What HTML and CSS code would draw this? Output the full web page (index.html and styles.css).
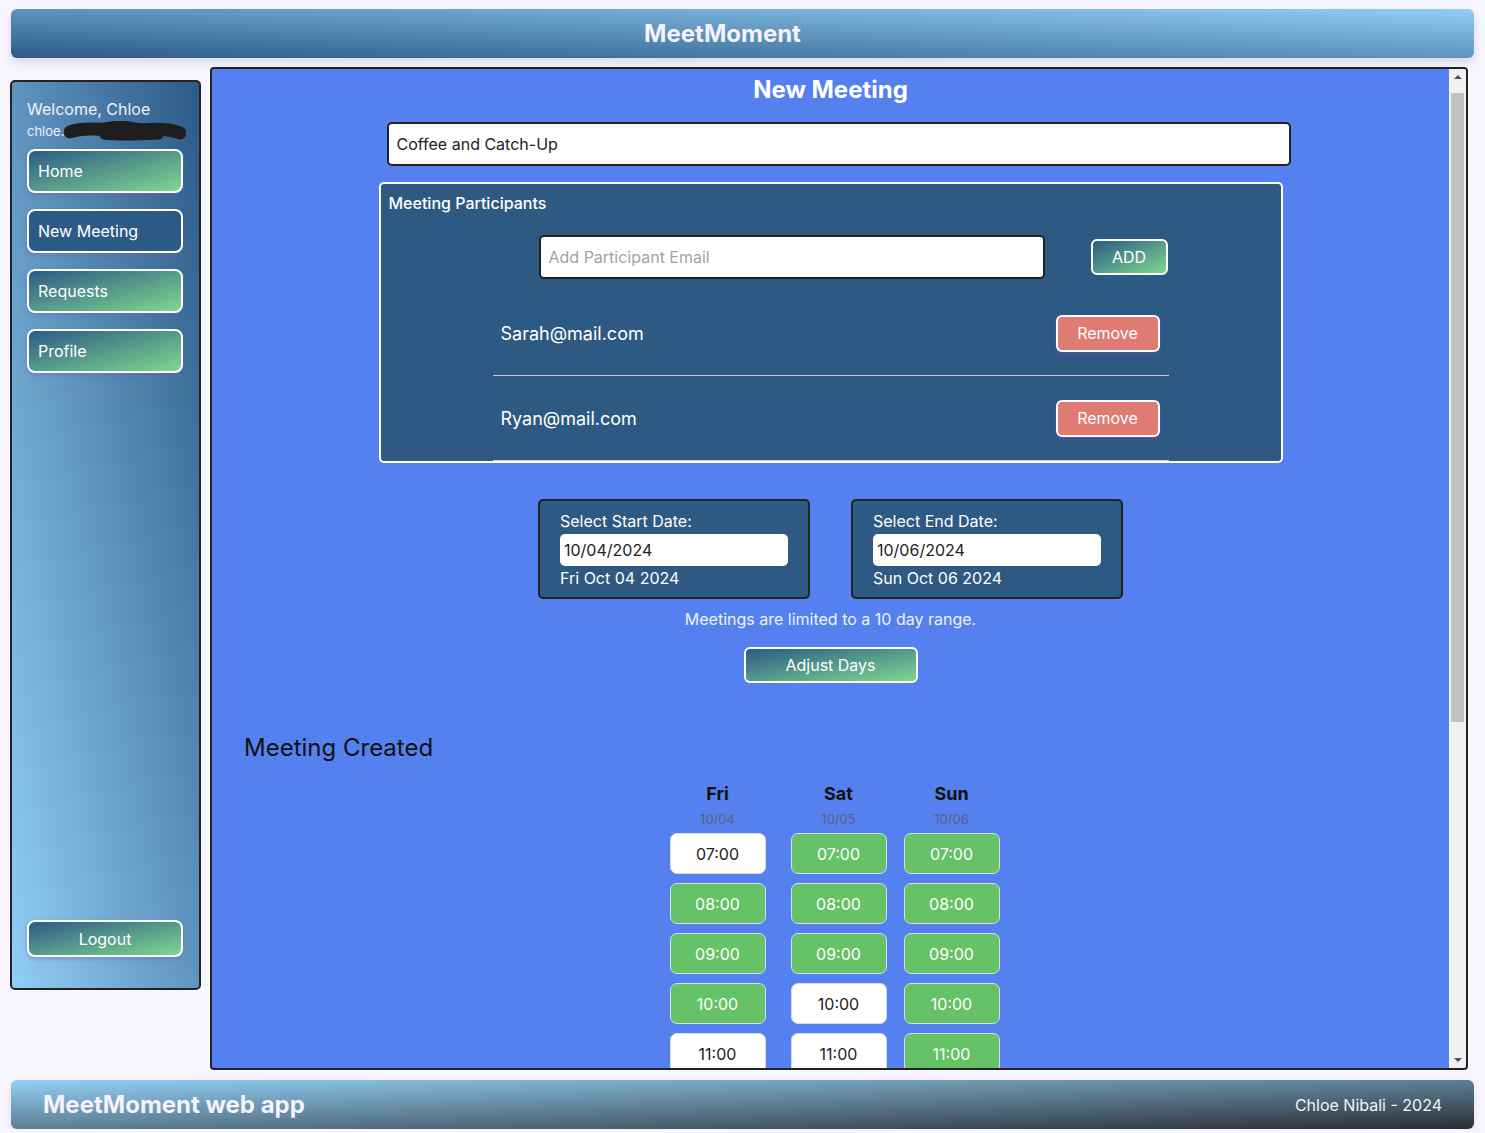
FILE: index.html
```html
<!DOCTYPE html>
<html lang="en">
<head>
<meta charset="utf-8">
<title>MeetMoment</title>
<link rel="stylesheet" href="styles.css">
</head>
<body>
<div class="app">
  <header class="topbar"><h1 class="brand">MeetMoment</h1></header>
  <div class="layout">
    <aside class="sidebar">
      <div class="welcome">Welcome, Chloe</div>
      <div class="email-line">chloe.<svg class="redact" width="122" height="22" viewBox="0 0 122 22"><path d="M6 11 C20 6 30 9 40 8 C52 6 60 5 70 8 C82 10 92 7 104 9 C110 10 114 11 116 12" stroke="#1e1e1e" stroke-width="13" stroke-linecap="round" fill="none"/><path d="M40 14 C55 16 75 15 95 14" stroke="#1e1e1e" stroke-width="9" stroke-linecap="round" fill="none"/></svg></div>
      <nav class="nav">
        <a class="nav-btn">Home</a>
        <a class="nav-btn active">New Meeting</a>
        <a class="nav-btn">Requests</a>
        <a class="nav-btn">Profile</a>
      </nav>
      <a class="logout">Logout</a>
    </aside>
    <main class="panel">
      <div class="panel-content">
        <h2 class="page-title">New Meeting</h2>
        <div class="title-wrap"><input class="title-input" type="text" value="Coffee and Catch-Up"></div>
        <section class="participants">
          <div class="participants-label">Meeting Participants</div>
          <div class="participants-inner">
            <div class="add-row">
              <input class="email-input" type="text" placeholder="Add Participant Email">
              <button class="btn-grad add-btn">ADD</button>
            </div>
            <div class="p-row"><span class="p-email">Sarah@mail.com</span><button class="remove-btn">Remove</button></div>
            <div class="p-row"><span class="p-email">Ryan@mail.com</span><button class="remove-btn">Remove</button></div>
          </div>
        </section>
        <div class="dates">
          <div class="date-box">
            <div class="date-label">Select Start Date:</div>
            <input class="date-input" type="text" value="10/04/2024">
            <div class="date-text">Fri Oct 04 2024</div>
          </div>
          <div class="date-box">
            <div class="date-label">Select End Date:</div>
            <input class="date-input" type="text" value="10/06/2024">
            <div class="date-text">Sun Oct 06 2024</div>
          </div>
        </div>
        <p class="limit">Meetings are limited to a 10 day range.</p>
        <div class="center"><button class="btn-grad adjust-btn">Adjust Days</button></div>
        <h3 class="created">Meeting Created</h3>
        <div class="schedule">
          <div class="day day-fri">
            <div class="day-name">Fri</div>
            <div class="day-date">10/04</div>
            <div class="slot">07:00</div>
            <div class="slot on">08:00</div>
            <div class="slot on">09:00</div>
            <div class="slot on">10:00</div>
            <div class="slot">11:00</div>
          </div>
          <div class="day">
            <div class="day-name">Sat</div>
            <div class="day-date">10/05</div>
            <div class="slot on">07:00</div>
            <div class="slot on">08:00</div>
            <div class="slot on">09:00</div>
            <div class="slot">10:00</div>
            <div class="slot">11:00</div>
          </div>
          <div class="day">
            <div class="day-name">Sun</div>
            <div class="day-date">10/06</div>
            <div class="slot on">07:00</div>
            <div class="slot on">08:00</div>
            <div class="slot on">09:00</div>
            <div class="slot on">10:00</div>
            <div class="slot on">11:00</div>
          </div>
        </div>
      </div>
      <div class="scrollbar">
        <div class="sb-btn"><span class="arrow-up"></span></div>
        <div class="sb-track"><div class="sb-thumb"></div></div>
        <div class="sb-btn"><span class="arrow-down"></span></div>
      </div>
    </main>
  </div>
  <footer class="footer">
    <span class="footer-brand">MeetMoment web app</span>
    <span class="footer-credit">Chloe Nibali - 2024</span>
  </footer>
</div>
</body>
</html>
```

FILE: styles.css
```css
* { box-sizing: border-box; }
html, body { margin: 0; padding: 0; }
body {
  background: #f7f5fd;
  font-family: Inter, "Noto Sans", "Liberation Sans", sans-serif;
  color: #fff;
  overflow: hidden;
}
.app { padding: 9px 11px 0 11px; }

.topbar {
  height: 49px;
  border-radius: 6px;
  background: linear-gradient(to top right, #2c5a87, #91cef4);
  box-shadow: 0 4px 8px rgba(60, 50, 110, 0.15);
  display: flex;
  align-items: center;
  justify-content: center;
  padding-right: 40px;
}
.brand {
  margin: 0;
  font-size: 24px;
  font-weight: 700;
  color: #f4f2fc;
  line-height: 29px;
}

.layout {
  display: flex;
  align-items: flex-start;
  margin-top: 9px;
  margin-left: -1px;
}

.sidebar {
  width: 191px;
  height: 910px;
  margin-top: 13px;
  border: 2px solid #222;
  border-radius: 5px;
  background: linear-gradient(to bottom left, #2c5a87, #91cef4);
  padding: 18px 16px 31px 15px;
  display: flex;
  flex-direction: column;
}
.welcome { font-size: 16px; line-height: 19px; color: #eef0fb; }
.email-line {
  font-size: 13px;
  line-height: 18px;
  margin-top: 3px;
  color: #eef0fb;
  display: flex;
  align-items: center;
  height: 18px;
}
.redact { margin-left: 0; margin-top: 2px; flex: none; }
.nav { display: flex; flex-direction: column; gap: 16px; margin-top: 9px; }
.nav-btn, .logout {
  display: flex;
  align-items: center;
  height: 44px;
  padding-left: 9px;
  border: 2px solid #fff;
  border-radius: 8px;
  background: linear-gradient(to bottom right, #2c5a87, #7fd88e);
  color: #fff;
  font-size: 16px;
  box-shadow: 0 2px 4px rgba(110, 90, 200, 0.45);
}
.nav-btn.active { background: #2c5a87; }
.logout {
  margin-top: auto;
  height: 37px;
  justify-content: center;
  padding-left: 0;
}

.panel {
  width: 1258px;
  height: 1003px;
  margin-left: 9px;
  border: 2px solid #222;
  border-radius: 4px;
  background: #5481ef;
  display: flex;
  overflow: hidden;
}
.panel-content {
  flex: 1;
  min-width: 0;
  overflow: hidden;
}
.scrollbar {
  width: 17px;
  flex: none;
  background: #f1f1f1;
  display: flex;
  flex-direction: column;
}
.sb-btn {
  height: 16px;
  display: flex;
  align-items: center;
  justify-content: center;
}
.arrow-up, .arrow-down {
  width: 0;
  height: 0;
  border-left: 4px solid transparent;
  border-right: 4px solid transparent;
}
.arrow-up { border-bottom: 4px solid #505050; }
.arrow-down { border-top: 4px solid #505050; }
.sb-track { flex: 1; padding: 8px 2px 0; }
.sb-thumb { height: 629px; background: #c1c1c1; }

.page-title {
  margin: 6px 0 0;
  font-size: 24px;
  line-height: 29px;
  font-weight: 700;
  text-align: center;
  color: #fff;
}
.title-wrap { width: 920px; margin: 18px auto 0; padding-left: 16px; }
.title-input {
  display: block;
  width: 100%;
  height: 44px;
  border: 2px solid #222;
  border-radius: 5px;
  padding: 0 8px;
  font-family: inherit;
  font-size: 16px;
  color: #222;
  background: #fff;
  outline: none;
}

.participants {
  width: 904px;
  margin: 16px auto 0;
  border: 2px solid #fff;
  border-radius: 5px;
  background: #2d5983;
  padding: 10px 0 0;
}
.participants-label {
  padding-left: 8px;
  font-size: 16px;
  line-height: 19px;
  font-weight: 500;
  color: #fff;
}
.participants-inner { width: 676px; margin: 0 auto; }
.add-row {
  display: flex;
  align-items: center;
  gap: 46px;
  margin-top: 22px;
  padding-left: 46px;
}
.email-input {
  width: 506px;
  height: 44px;
  border: 2px solid #222;
  border-radius: 5px;
  padding: 0 8px;
  font-family: inherit;
  font-size: 16px;
  color: #222;
  background: #fff;
  outline: none;
}
.email-input::placeholder { color: #9ca3af; }
.btn-grad {
  border: 2px solid #fff;
  border-radius: 6px;
  background: linear-gradient(to bottom right, #2c5a87, #7fd88e);
  color: #fff;
  font-family: inherit;
  font-size: 16px;
  padding: 0;
}
.add-btn { width: 77px; height: 36px; }
.p-row {
  display: flex;
  align-items: center;
  justify-content: space-between;
  height: 85px;
  padding: 0 9px 0 8px;
  border-bottom: 1px solid #c9ccd6;
}
.add-row + .p-row { margin-top: 12px; }
.p-email { font-size: 18px; color: #fff; }
.remove-btn {
  width: 104px;
  height: 37px;
  border: 2px solid #fff;
  border-radius: 6px;
  background: #e07b74;
  color: #fff;
  font-family: inherit;
  font-size: 16px;
  box-shadow: 0 2px 4px rgba(110, 90, 200, 0.45);
}

.dates {
  display: flex;
  justify-content: center;
  gap: 41px;
  margin-top: 36px;
}
.date-box {
  width: 272px;
  height: 100px;
  border: 2px solid #222;
  border-radius: 5px;
  background: #2d5983;
  padding: 11px 20px 10px;
}
.date-label, .date-text { font-size: 16px; line-height: 19px; color: #fff; }
.date-input {
  display: block;
  width: 100%;
  height: 32px;
  margin: 3px 0 3px;
  border: none;
  border-radius: 5px;
  padding: 0 4px;
  font-family: inherit;
  font-size: 16px;
  color: #222;
  background: #fff;
  outline: none;
}
.limit {
  margin: 11px 0 0;
  text-align: center;
  font-size: 16px;
  line-height: 19px;
  color: #eef0ff;
}
.center { display: flex; justify-content: center; margin-top: 18px; }
.adjust-btn { width: 174px; height: 36px; }

.created {
  margin: 50px 0 0 32px;
  font-size: 24px;
  line-height: 29px;
  font-weight: 400;
  color: #111;
}
.schedule {
  display: flex;
  justify-content: center;
  gap: 17px;
  margin-top: 21px;
  padding-left: 8px;
}
.day { width: 96px; display: flex; flex-direction: column; align-items: center; gap: 9px; }
.day-fri { margin-right: 8px; }
.day-name { font-size: 18px; font-weight: 700; color: #111; line-height: 22px; }
.day-date { font-size: 13px; color: #5a5f80; line-height: 16px; margin-top: -3px; margin-bottom: -3px; }
.slot {
  width: 96px;
  height: 41px;
  flex: none;
  border: 1px solid #d9dce6;
  border-radius: 7px;
  background: #fff;
  color: #222;
  font-size: 16px;
  display: flex;
  align-items: center;
  justify-content: center;
}
.slot.on { background: #66c266; color: #fff; }

.footer {
  height: 49px;
  margin-top: 10px;
  border-radius: 6px;
  background: linear-gradient(to bottom right, #92d0f5, #2a2e33);
  box-shadow: 0 3px 6px rgba(60, 50, 110, 0.12);
  display: flex;
  align-items: center;
  justify-content: space-between;
  padding: 0 32px;
}
.footer-brand { font-size: 24px; font-weight: 700; color: #f4f2fc; }
.footer-credit { font-size: 16px; color: #f4f2fc; }
```
